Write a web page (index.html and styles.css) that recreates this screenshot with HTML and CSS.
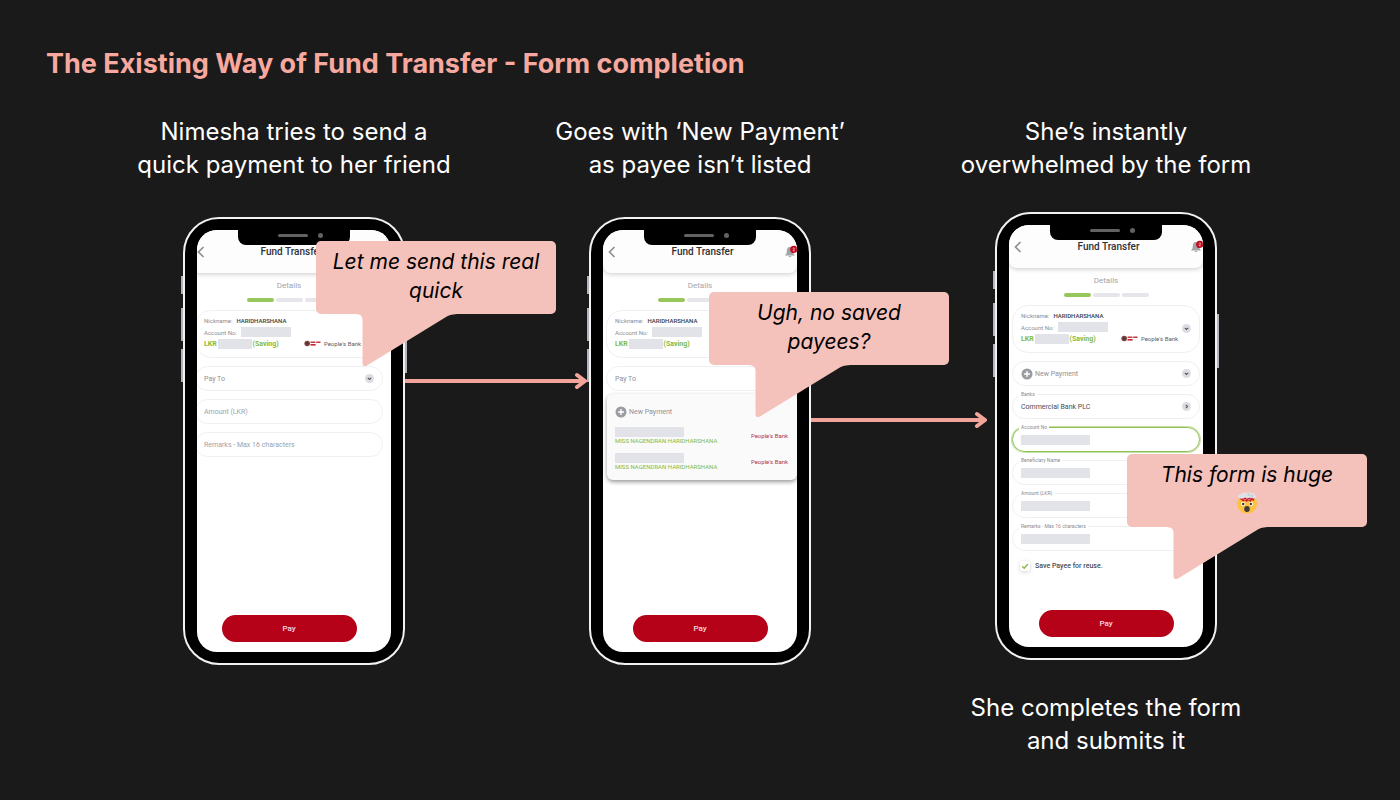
FILE: index.html
```html
<!DOCTYPE html>
<html lang="en">

<head>
    <meta charset="UTF-8">
    <meta name="viewport" content="width=device-width, initial-scale=1.0">
    <title>The Existing Way of Fund Transfer</title>
    <link rel="stylesheet" href="styles.css">
</head>

<body>

    <!-- Shared icons -->
    <svg class="sprite" aria-hidden="true">
        <symbol id="icon-back" viewBox="0 0 8 12">
            <path d="M6.5 1 L1.5 6 L6.5 11" fill="none" stroke="#8f9095" stroke-width="1.7" />
        </symbol>
        <symbol id="icon-bell" viewBox="0 0 14 14">
            <path d="M6 2 C3.6 2 2.8 4 2.8 6 C2.8 8.4 2.2 9.2 1 10.4 H11 C9.8 9.2 9.2 8.4 9.2 6 C9.2 4 8.4 2 6 2 Z M4.6 11 H7.4 C7.2 12.6 4.8 12.6 4.6 11 Z" fill="#a3a4a9" />
            <circle cx="9.8" cy="4.4" r="3.7" fill="#c00d22" />
            <path d="M9 3.5 C9.3 2.6 10.7 2.8 10.5 3.9 L9 5.8 H10.7" fill="none" stroke="#fff" stroke-width="0.6" />
        </symbol>
        <symbol id="icon-down" viewBox="0 0 9 9">
            <circle cx="4.5" cy="4.5" r="4.5" fill="#dcdde2" />
            <path d="M2.8 3.8 L4.5 5.5 L6.2 3.8" fill="none" stroke="#55565c" stroke-width="1.1" />
        </symbol>
        <symbol id="icon-right" viewBox="0 0 9 9">
            <circle cx="4.5" cy="4.5" r="4.5" fill="#dcdde2" />
            <path d="M3.8 2.8 L5.5 4.5 L3.8 6.2" fill="none" stroke="#55565c" stroke-width="1.1" />
        </symbol>
        <symbol id="icon-plus" viewBox="0 0 12 12">
            <circle cx="6" cy="6" r="5.5" fill="#9b9ca1" />
            <path d="M6 3 V9 M3 6 H9" stroke="#fff" stroke-width="1.4" />
        </symbol>
        <symbol id="icon-bank" viewBox="0 0 18 7">
            <circle cx="3.2" cy="3.5" r="2.8" fill="#7b4540" />
            <path d="M1.5 3.5 H5 M3.2 1.6 V5.4" stroke="#4c2f2c" stroke-width="0.7" />
            <path d="M6.5 2.2 H11.4 M12.2 2.2 H16.5" stroke="#c43a3f" stroke-width="1.4" />
            <path d="M6.5 4.8 H11.6" stroke="#c8202c" stroke-width="1.6" />
        </symbol>
        <symbol id="bubble-tail" viewBox="0 0 106 54">
            <path d="M0 0 H106 V1 C99 1 95 1 90 4 L11 52.5 Q6.5 54.5 6.5 50 V7 Q6.5 1 0 1 Z" fill="#f5c2bb" />
        </symbol>
    </svg>

    <h1>The Existing Way of Fund Transfer - Form completion</h1>

    <main class="steps">

        <!-- Step 1 -->
        <section class="step">
            <h2>Nimesha tries to send a<br>quick payment to her friend</h2>
            <div class="phone">
                <span class="side side-mute"></span>
                <span class="side side-up"></span>
                <span class="side side-down"></span>
                <span class="side side-power"></span>
                <div class="screen">
                    <div class="notch"><span class="speaker"></span><span class="camera"></span></div>
                    <form class="app app-shifted">
                        <header>
                            <button type="button" class="icon-btn" aria-label="Back"><svg class="back"><use href="#icon-back" /></svg></button>
                            <h3>Fund Transfer</h3>
                            <button type="button" class="icon-btn" aria-label="Notifications"><svg class="bell"><use href="#icon-bell" /></svg></button>
                        </header>
                        <p class="stage">Details</p>
                        <div class="progress"><span class="done"></span><span></span><span></span></div>
                        <div class="account">
                            <p>Nickname: <b>HARIDHARSHANA</b></p>
                            <p>Account No: <span class="redacted"></span></p>
                            <p class="balance">LKR <span class="redacted small"></span>(Saving)</p>
                            <span class="bank"><svg class="logo"><use href="#icon-bank" /></svg>People's Bank</span>
                        </div>
                        <div class="field">
                            <select aria-label="Pay To">
                                <option>Pay To</option>
                            </select>
                            <svg class="chevron"><use href="#icon-down" /></svg>
                        </div>
                        <div class="field"><input type="text" placeholder="Amount (LKR)" aria-label="Amount (LKR)"></div>
                        <div class="field"><input type="text" placeholder="Remarks - Max 16 characters" aria-label="Remarks"></div>
                        <button type="button" class="pay">Pay</button>
                    </form>
                </div>
                <svg class="arrow arrow-one" viewBox="0 0 182 18">
                    <path d="M0 9 H178" stroke="#f4a59b" stroke-width="4" />
                    <path d="M172 3 L180 9 L172 15" fill="none" stroke="#f4a59b" stroke-width="4" stroke-linecap="round" stroke-linejoin="round" />
                </svg>
                <div class="bubble bubble-one">
                    Let me send this real quick
                    <svg class="tail"><use href="#bubble-tail" /></svg>
                </div>
            </div>
        </section>

        <!-- Step 2 -->
        <section class="step">
            <h2>Goes with ‘New Payment’<br>as payee isn’t listed</h2>
            <div class="phone">
                <span class="side side-mute"></span>
                <span class="side side-up"></span>
                <span class="side side-down"></span>
                <div class="screen">
                    <div class="notch"><span class="speaker"></span><span class="camera"></span></div>
                    <form class="app">
                        <header>
                            <button type="button" class="icon-btn" aria-label="Back"><svg class="back"><use href="#icon-back" /></svg></button>
                            <h3>Fund Transfer</h3>
                            <button type="button" class="icon-btn" aria-label="Notifications"><svg class="bell"><use href="#icon-bell" /></svg></button>
                        </header>
                        <p class="stage">Details</p>
                        <div class="progress"><span class="done"></span><span></span><span></span></div>
                        <div class="account">
                            <p>Nickname: <b>HARIDHARSHANA</b></p>
                            <p>Account No: <span class="redacted"></span></p>
                            <p class="balance">LKR <span class="redacted small"></span>(Saving)</p>
                        </div>
                        <div class="field">
                            <select aria-label="Pay To">
                                <option>Pay To</option>
                            </select>
                            <div class="menu">
                                <button type="button" class="new-payment"><svg class="plus"><use href="#icon-plus" /></svg>New Payment</button>
                                <button type="button" class="payee">
                                    <span><span class="redacted"></span>MISS NAGENDRAN HARIDHARSHANA</span>
                                    <span class="payee-bank">People's Bank</span>
                                </button>
                                <button type="button" class="payee">
                                    <span><span class="redacted"></span>MISS NAGENDRAN HARIDHARSHANA</span>
                                    <span class="payee-bank">People's Bank</span>
                                </button>
                            </div>
                        </div>
                        <button type="button" class="pay">Pay</button>
                    </form>
                </div>
                <svg class="arrow arrow-two" viewBox="0 0 176 18">
                    <path d="M0 9 H172" stroke="#f4a59b" stroke-width="4" />
                    <path d="M166 3 L174 9 L166 15" fill="none" stroke="#f4a59b" stroke-width="4" stroke-linecap="round" stroke-linejoin="round" />
                </svg>
                <div class="bubble bubble-two">
                    Ugh, no saved<br>payees?
                    <svg class="tail"><use href="#bubble-tail" /></svg>
                </div>
            </div>
        </section>

        <!-- Step 3 -->
        <section class="step step-last">
            <h2>She’s instantly<br>overwhelmed by the form</h2>
            <div class="phone">
                <span class="side side-mute"></span>
                <span class="side side-up"></span>
                <span class="side side-down"></span>
                <span class="side side-power"></span>
                <div class="screen">
                    <div class="notch"><span class="speaker"></span><span class="camera"></span></div>
                    <form class="app">
                        <header>
                            <button type="button" class="icon-btn" aria-label="Back"><svg class="back"><use href="#icon-back" /></svg></button>
                            <h3>Fund Transfer</h3>
                            <button type="button" class="icon-btn" aria-label="Notifications"><svg class="bell"><use href="#icon-bell" /></svg></button>
                        </header>
                        <p class="stage">Details</p>
                        <div class="progress"><span class="done"></span><span></span><span></span></div>
                        <div class="account">
                            <p>Nickname: <b>HARIDHARSHANA</b></p>
                            <p>Account No: <span class="redacted"></span></p>
                            <p class="balance">LKR <span class="redacted small"></span>(Saving)</p>
                            <span class="bank"><svg class="logo"><use href="#icon-bank" /></svg>People's Bank</span>
                            <button type="button" class="icon-btn account-more" aria-label="Change account"><svg class="chevron"><use href="#icon-down" /></svg></button>
                        </div>
                        <div class="field">
                            <svg class="plus"><use href="#icon-plus" /></svg>
                            <select aria-label="Pay To">
                                <option>New Payment</option>
                            </select>
                            <svg class="chevron"><use href="#icon-down" /></svg>
                        </div>
                        <div class="field">
                            <label for="bank">Banks</label>
                            <select id="bank" class="filled">
                                <option>Commercial Bank PLC</option>
                            </select>
                            <svg class="chevron"><use href="#icon-right" /></svg>
                        </div>
                        <div class="field active">
                            <label for="accountNo">Account No</label>
                            <input type="text" id="accountNo" class="hidden-value">
                        </div>
                        <div class="field">
                            <label for="beneficiary">Beneficiary Name</label>
                            <input type="text" id="beneficiary" class="hidden-value">
                        </div>
                        <div class="field">
                            <label for="amount">Amount (LKR)</label>
                            <input type="text" id="amount" class="hidden-value">
                        </div>
                        <div class="field">
                            <label for="remarks">Remarks - Max 16 characters</label>
                            <input type="text" id="remarks" class="hidden-value">
                        </div>
                        <div class="save">
                            <span class="check">
                                <input type="checkbox" id="savePayee" checked>
                                <svg viewBox="0 0 8 8"><path d="M1.2 4.2 L3.2 6.2 L6.8 2" fill="none" stroke="#84b93c" stroke-width="1.3" /></svg>
                            </span>
                            <label for="savePayee">Save Payee for reuse.</label>
                        </div>
                        <button type="button" class="pay">Pay</button>
                    </form>
                </div>
                <div class="bubble bubble-three">
                    This form is huge
                    <svg class="emoji" viewBox="0 0 22 22" role="img" aria-label="Exploding head">
                        <path d="M1 11 C1 8 2 7 4 6.5 H18 C20 7 21 8 21 11 C21 17.5 17 21.5 11 21.5 C5 21.5 1 17.5 1 11 Z" fill="#fcc341" />
                        <path d="M3.5 7 C5 4 8 5 11 5 C14 5 17 4 18.5 7 L17.5 9 L16 8 L14.5 10 L12.5 8.5 L10.5 10 L9 8.5 L7 9.5 L5.5 8 Z" fill="#c42331" />
                        <path d="M7 6.5 L9 7.8 L11 6.5 L13 7.8 L15 6.5" fill="none" stroke="#f0707a" stroke-width="1" />
                        <path d="M2.5 5.5 C1.5 3.5 3 1.8 5 2.3 C5.5 0.5 8.5 0 9.8 1.2 C11.5 0 14 0 15 1.5 C17 0.5 19 1.5 18.5 3 C20.5 3.5 20.5 6 18.5 6.3 C16.5 7 15 5.5 13.5 5.8 C11.5 6.5 10 5 8 6 C6 7 3.5 7 2.5 5.5 Z" fill="#dde2e6" />
                        <path d="M11.5 2.5 C13 1.5 14 3 13 4 M15.5 3 C17 3 17 5 15.5 5" fill="none" stroke="#a9b3ba" stroke-width="0.8" />
                        <circle cx="7" cy="12" r="2" fill="#fff" />
                        <circle cx="15" cy="12" r="2" fill="#fff" />
                        <circle cx="7.2" cy="12" r="1.2" fill="#3c3438" />
                        <circle cx="14.8" cy="12" r="1.2" fill="#3c3438" />
                        <ellipse cx="11" cy="17" rx="2.8" ry="3" fill="#403b43" />
                    </svg>
                    <svg class="tail"><use href="#bubble-tail" /></svg>
                </div>
            </div>
            <p class="outcome">She completes the form<br>and submits it</p>
        </section>

    </main>

</body>

</html>
```
FILE: styles.css
```css
* {
    box-sizing: border-box;
}

body {
    font-family: Inter, 'Liberation Sans', sans-serif;
    background-color: #1a1a1a;
    color: white;
    margin: 0;
    padding: 47px 0 0;
}

h1,
h2,
h3,
p {
    margin: 0;
}

button,
input,
select {
    font-family: inherit;
    border: none;
    background: none;
    padding: 0;
    margin: 0;
    outline: none;
}

button {
    cursor: pointer;
}

svg {
    display: block;
    flex: none;
}

.sprite {
    position: absolute;
    width: 0;
    height: 0;
}

h1 {
    color: #f8a99f;
    font-size: 27px;
    font-weight: 700;
    line-height: 34px;
    padding: 0 46px;
}

.steps {
    display: grid;
    grid-template-columns: repeat(3, 1fr);
    max-width: 1218px;
    margin: 34px auto 0;
}

.step {
    display: flex;
    flex-direction: column;
    align-items: center;
    gap: 36px;
}

.step-last {
    gap: 31px;
}

h2,
.outcome {
    font-size: 24px;
    font-weight: 400;
    line-height: 33px;
    text-align: center;
    white-space: nowrap;
}

/* Phone */
.phone {
    position: relative;
    width: 222px;
    height: 448px;
    border: 2px solid #f2f2f2;
    border-radius: 36px;
    background-color: black;
    padding: 11px 12px;
}

.screen {
    position: relative;
    height: 100%;
    border-radius: 20px;
    background-color: white;
    overflow: hidden;
}

.notch {
    position: absolute;
    z-index: 2;
    top: 0;
    left: 50%;
    width: 112px;
    height: 15px;
    margin-left: -56px;
    padding: 0 27px 4px 40px;
    display: flex;
    align-items: center;
    justify-content: space-between;
    background-color: black;
    border-radius: 0 0 8px 8px;
}

.speaker {
    width: 30px;
    height: 3px;
    border-radius: 2px;
    background-color: #626262;
}

.camera {
    width: 5px;
    height: 5px;
    border-radius: 50%;
    background-color: #626262;
}

.side {
    position: absolute;
    left: -4px;
    width: 2px;
    height: 33px;
    background-color: #b4b4bc;
}

.side-mute {
    top: 57px;
    height: 18px;
}

.side-up {
    top: 89px;
}

.side-down {
    top: 130px;
}

.side-power {
    left: auto;
    right: -4px;
    top: 100px;
    height: 54px;
}

/* App inside the phone */
.app {
    display: flex;
    flex-direction: column;
    height: 100%;
    padding-bottom: 10px;
    font-family: Roboto, 'Liberation Sans', sans-serif;
    font-size: 6px;
    color: #8a8c93;
}

.app-shifted {
    margin: 0 5px 0 -5px;
}

.app header {
    display: flex;
    align-items: center;
    justify-content: space-between;
    height: 43px;
    padding-left: 5px;
    background-color: #fdfdfd;
    border-radius: 0 0 8px 8px;
    box-shadow: 0 1px 5px #c9c9ce;
}

.icon-btn {
    display: flex;
    width: 13px;
}

.back {
    width: 8px;
    height: 12px;
}

.bell {
    width: 14px;
    height: 14px;
}

.app h3 {
    color: #303136;
    font-size: 10px;
    font-weight: 500;
}

.stage {
    margin-top: 8px;
    font-size: 8px;
    line-height: 10px;
    color: #a3a4ab;
    text-align: center;
}

.progress {
    display: flex;
    justify-content: center;
    gap: 2px;
    margin-top: 7px;
}

.progress span {
    width: 27px;
    height: 4px;
    border-radius: 2px;
    background-color: #e6e6ea;
}

.progress .done {
    background-color: #97c65c;
}

.account {
    position: relative;
    height: 48px;
    margin: 8px 3px 0;
    padding: 3px 8px;
    border: 1px solid #f0f0f2;
    border-radius: 16px;
}

.account p {
    display: flex;
    align-items: center;
    height: 12px;
    gap: 4px;
}

.account b {
    color: #3a3b40;
    font-weight: 500;
}

.redacted {
    display: block;
    width: 50px;
    height: 10px;
    background-color: #e2e3e8;
}

.redacted.small {
    width: 34px;
}

.account .balance {
    gap: 0;
    color: #84b93c;
    font-size: 7px;
    font-weight: 700;
    white-space: pre;
}

.bank {
    position: absolute;
    right: 21px;
    bottom: 10px;
    display: flex;
    align-items: center;
    gap: 2px;
    color: #5b5c62;
}

.logo {
    width: 18px;
    height: 7px;
}

.account-more {
    position: absolute;
    right: 8px;
    top: 18px;
    width: 9px;
}

.chevron {
    width: 9px;
    height: 9px;
}

.plus {
    width: 12px;
    height: 12px;
    margin-right: 2px;
}

.field {
    position: relative;
    display: flex;
    align-items: center;
    height: 25px;
    margin: 8px 3px 0;
    padding: 0 8px;
    border: 1px solid #f0f0f2;
    border-radius: 13px;
}

.field select,
.field input {
    flex: 1;
    min-width: 0;
    appearance: none;
    font-size: 7px;
    color: #8f9197;
}

.field input::placeholder {
    color: #a0a1a8;
}

.field .filled {
    color: #4b4c52;
}

.field label {
    position: absolute;
    top: -4px;
    left: 6px;
    padding: 0 2px;
    background-color: white;
    font-size: 5px;
    line-height: 6px;
}

.field .hidden-value {
    flex: none;
    width: 69px;
    height: 10px;
    background-color: #e2e3e8;
}

.field.active {
    border: 1px solid #8fc155;
    box-shadow: 0 0 0 1px #c5e0a5;
}

.menu {
    position: absolute;
    z-index: 1;
    top: 27px;
    left: 0;
    right: -4px;
    height: 86px;
    padding: 11px 9px 0 8px;
    border-radius: 6px;
    background-color: #fafafa;
    box-shadow: 0 2px 4px #9a9a9e;
}

.new-payment {
    display: flex;
    align-items: center;
    height: 14px;
    color: #8f9197;
    font-size: 7px;
}

.payee {
    display: flex;
    align-items: center;
    justify-content: space-between;
    width: 100%;
    height: 18px;
    margin-top: 8px;
    color: #84b93c;
    font-size: 6px;
    line-height: 8px;
    text-align: left;
    white-space: nowrap;
}

.payee .redacted {
    width: 69px;
}

.payee-bank {
    color: #b2353f;
}

.save {
    display: flex;
    align-items: center;
    gap: 5px;
    margin: 10px 11px 0;
    color: #4b4c52;
    font-size: 7px;
    font-weight: 500;
}

.check {
    position: relative;
    width: 10px;
    height: 10px;
}

.check input {
    display: block;
    appearance: none;
    width: 10px;
    height: 10px;
    border-radius: 3px;
    background-color: white;
    box-shadow: 0 1px 4px #d4d4d8;
}

.check svg {
    position: absolute;
    top: 1px;
    left: 1px;
    width: 8px;
    height: 8px;
    pointer-events: none;
}

.pay {
    align-self: center;
    width: 135px;
    height: 27px;
    margin-top: auto;
    border-radius: 14px;
    background-color: #b60218;
    color: #f7dfe2;
    font-size: 8px;
    font-weight: 500;
}

/* Speech bubbles and arrows */
.bubble {
    position: absolute;
    z-index: 3;
    width: 240px;
    height: 73px;
    padding: 6px 10px;
    border-radius: 5px;
    background-color: #f5c2bb;
    color: black;
    font-size: 21px;
    font-style: italic;
    line-height: 29px;
    text-align: center;
}

.bubble-one {
    top: 22px;
    left: 131px;
}

.bubble-two {
    top: 73px;
    left: 118px;
}

.bubble-three {
    top: 240px;
    left: 130px;
}

.tail {
    position: absolute;
    top: 72px;
    left: 40px;
    width: 106px;
    height: 54px;
}

.emoji {
    width: 22px;
    height: 22px;
    margin: 3px auto 0;
}

.arrow {
    position: absolute;
    z-index: 2;
    left: 220px;
    height: 18px;
}

.arrow-one {
    top: 153px;
    width: 182px;
}

.arrow-two {
    top: 192px;
    width: 176px;
}
```
